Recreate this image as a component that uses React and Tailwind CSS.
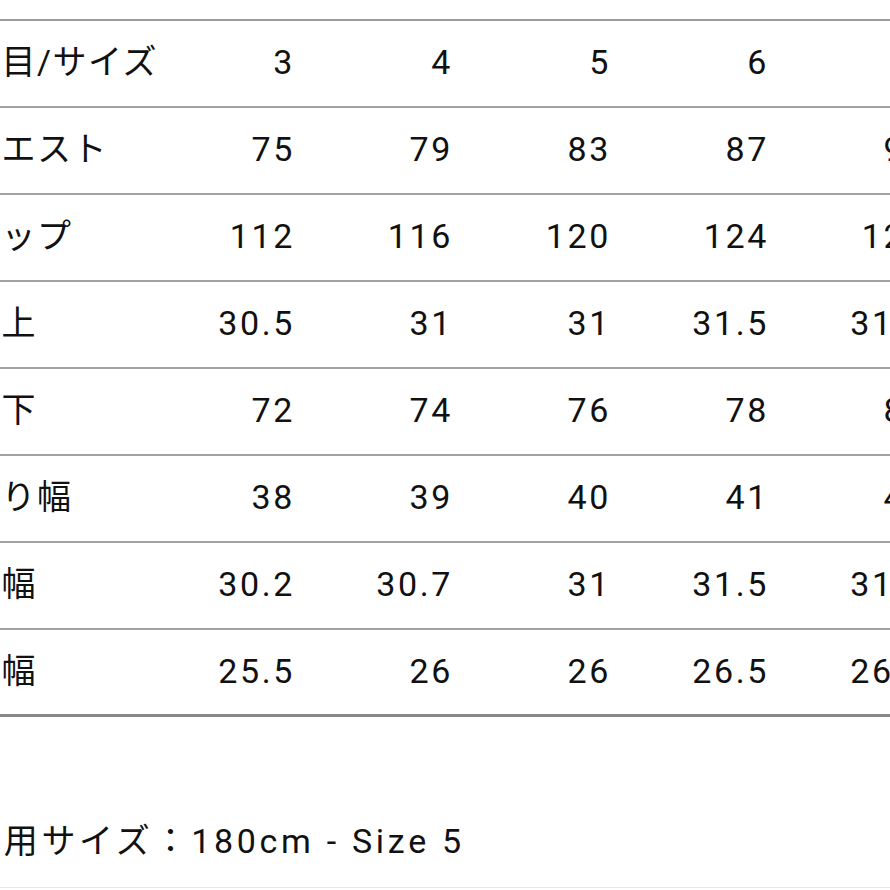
const rows = [
  ["項目/サイズ", "3", "4", "5", "6", "7"],
  ["ウエスト", "75", "79", "83", "87", "91"],
  ["ヒップ", "112", "116", "120", "124", "128"],
  ["股上", "30.5", "31", "31", "31.5", "31.5"],
  ["股下", "72", "74", "76", "78", "80"],
  ["渡り幅", "38", "39", "40", "41", "42"],
  ["膝幅", "30.2", "30.7", "31", "31.5", "31.8"],
  ["裾幅", "25.5", "26", "26", "26.5", "26.8"],
];

const App = () => {
  return (
    <div
      className="w-[890px] h-[890px] overflow-hidden bg-white text-[#111]"
      style={{ fontFamily: 'Roboto, "Noto Sans CJK JP", sans-serif' }}
    >
      <div className="ml-[-34px] w-[960px] pt-[19px]">
        <div className="border-t-2 border-[#9c9c9c]">
          {rows.map((row, i) => (
            <div
              key={i}
              className={
                "grid grid-cols-[171px_repeat(5,158px)] h-[87px] pb-[3px] items-center text-[34px] leading-none tracking-[2.6px] " +
                (i === rows.length - 1
                  ? "border-b-[3px] border-[#888888]"
                  : "border-b-2 border-[#a2a2a2]")
              }
            >
              <div className="whitespace-nowrap tracking-[1.5px]">{row[0]}</div>
              {row.slice(1).map((v, j) => (
                <div key={j} className="text-right">
                  {v}
                </div>
              ))}
            </div>
          ))}
        </div>
        <div className="mt-[100px] h-[48px] flex items-center text-[34px] tracking-[3.7px] whitespace-nowrap">
          着用サイズ：180cm - Size 5
        </div>
        <div className="mt-[22px] border-t border-[#e6e6e6]" />
      </div>
    </div>
  );
};

export default App;
